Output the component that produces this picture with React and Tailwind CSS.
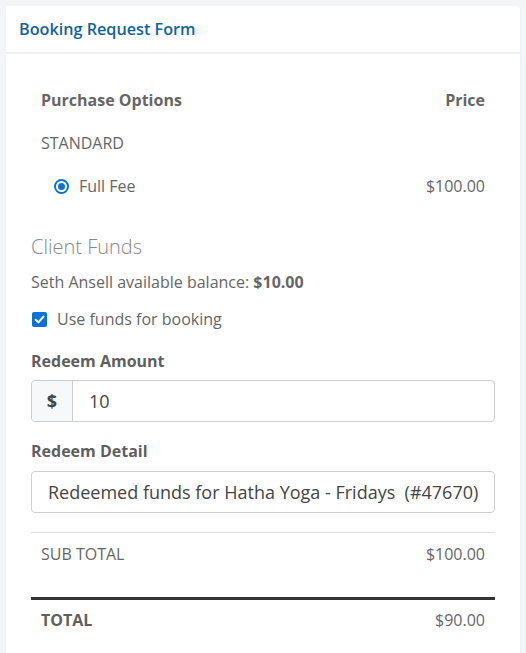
export default function App() {
  const font = { fontFamily: '"Open Sans", "Liberation Sans", sans-serif' };
  return (
    <div className="min-h-[653px] bg-[#f4f5f7] pt-[6px] px-[6px] text-[#666]" style={font}>
      <div className="bg-white rounded-t-[4px] h-[46px] flex items-center px-[13px] shadow-[0_1px_2px_rgba(0,0,0,0.05)]">
        <span className="text-[16.2px] font-semibold text-[#11639a]">Booking Request Form</span>
      </div>
      <div className="mt-[2px] bg-white px-[25px] pt-[24px] pb-[40px] shadow-[0_1px_2px_rgba(0,0,0,0.05)]">
        <div className="text-[16px]">
          <div className="h-[43px] flex items-center justify-between px-[10px] font-bold text-[#666]">
            <span>Purchase Options</span>
            <span>Price</span>
          </div>
          <div className="h-[43px] flex items-center px-[10px] uppercase">STANDARD</div>
          <div className="h-[44px] flex items-center justify-between px-[10px]">
            <div className="flex items-center">
              <span className="ml-[13px] w-[15px] h-[15px] rounded-full border-[2px] border-[#0b72d9] flex items-center justify-center">
                <span className="w-[7px] h-[7px] rounded-full bg-[#0b72d9]" />
              </span>
              <span className="ml-[10px]">Full Fee</span>
            </div>
            <span>$100.00</span>
          </div>
        </div>
        <div className="mt-[27px] text-[20px] font-light leading-[24px] text-[#888]">Client Funds</div>
        <div className="mt-[11px] text-[16px] leading-[24px]">
          Seth Ansell available balance: <span className="font-bold">$10.00</span>
        </div>
        <div className="mt-[13px] flex items-center h-[24px] text-[16px]">
          <span className="ml-[1px] w-[15px] h-[15px] rounded-[2px] bg-[#0b72d9] flex items-center justify-center">
            <svg width="11" height="11" viewBox="0 0 10 10">
              <path d="M1.5 5.2 L4 7.6 L8.6 2.4" stroke="white" strokeWidth="1.8" fill="none" strokeLinecap="round" strokeLinejoin="round" />
            </svg>
          </span>
          <span className="ml-[10px]">Use funds for booking</span>
        </div>
        <div className="mt-[18px] text-[16px] font-bold leading-[24px] text-[#5f5f5f]">Redeem Amount</div>
        <div className="mt-[7px] flex h-[42px] border border-[#cfcfcf] rounded-[4px] overflow-hidden">
          <div className="w-[41px] bg-[#f7f8fa] border-r border-[#cfcfcf] flex items-center justify-center text-[18px] font-bold text-[#444]">$</div>
          <div className="flex-1 flex items-center pl-[16px] text-[18px] text-[#444]">10</div>
        </div>
        <div className="mt-[17px] text-[16px] font-bold leading-[24px] text-[#5f5f5f]">Redeem Detail</div>
        <div className="mt-[8px] h-[42px] border border-[#cfcfcf] rounded-[4px] flex items-center pl-[16px] text-[18px] text-[#444] whitespace-pre">
          Redeemed funds for Hatha Yoga - Fridays  (#47670)
        </div>
        <div className="mt-[19px] border-t border-[#dcdcdc]" />
        <div className="h-[42px] flex items-center justify-between px-[10px] text-[16px]">
          <span>SUB TOTAL</span>
          <span>$100.00</span>
        </div>
        <div className="mt-[22px] border-t-[3px] border-[#333]" />
        <div className="h-[40px] flex items-center justify-between px-[10px] text-[16px]">
          <span className="font-bold text-[#5f5f5f]">TOTAL</span>
          <span>$90.00</span>
        </div>
      </div>
    </div>
  );
}
